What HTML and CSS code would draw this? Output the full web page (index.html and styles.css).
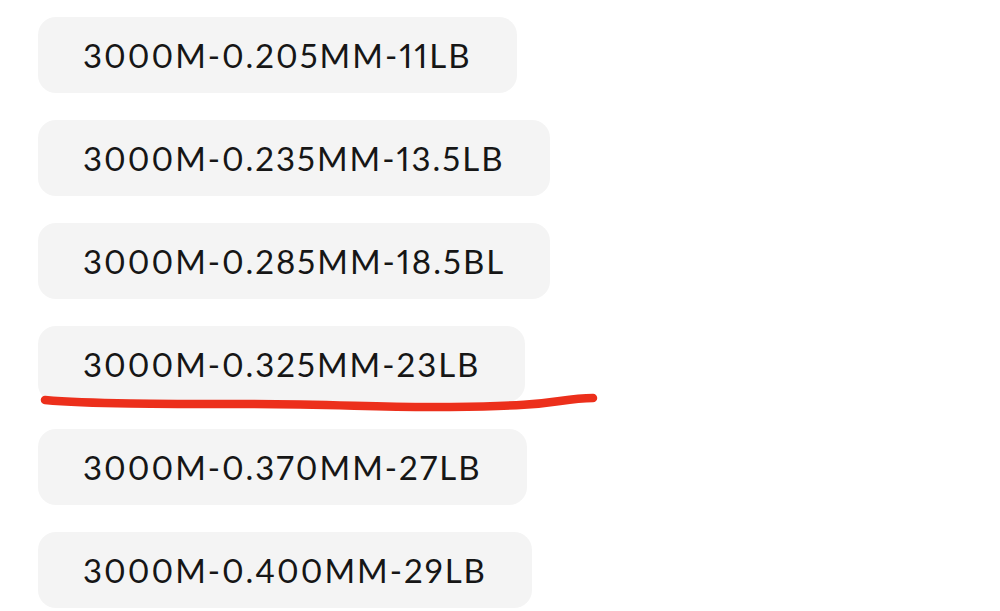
FILE: index.html
```html
<!DOCTYPE html>
<html lang="en">
<head>
  <meta charset="UTF-8">
  <title>Line spec</title>
  <link rel="stylesheet" href="styles.css">
</head>
<body>

  <div class="options">
    <div class="chip">3000M-0.205MM-11LB</div>
    <div class="chip">3000M-0.235MM-13.5LB</div>
    <div class="chip">3000M-0.285MM-18.5BL</div>
    <div class="chip">3000M-0.325MM-23LB</div>
    <div class="chip">3000M-0.370MM-27LB</div>
    <div class="chip">3000M-0.400MM-29LB</div>
  </div>

  <!-- hand drawn mark under the chosen one -->
  <svg class="mark" width="600" height="30" viewBox="0 0 600 30">
    <path d="M45 10 C 90 14, 160 14, 250 14 S 380 18, 450 17 S 540 14, 560 11 S 585 8, 593 8"
          fill="none" stroke="#ec2f1b" stroke-width="8.5" stroke-linecap="round"/>
  </svg>

</body>
</html>
```

FILE: styles.css
```css
body {
  margin: 0;
  background: #ffffff;
  font-family: 'Lato', 'Noto Sans', sans-serif;
  color: #161616;
  position: relative;
  height: 611px;
  overflow: hidden;
}

.options {
  display: flex;
  flex-direction: column;
  align-items: flex-start;
  gap: 27px;
  padding: 17px 0 0 38px;
}

.chip {
  display: flex;
  align-items: center;
  height: 76px;
  padding: 0 45px;
  background: #f4f4f4;
  border-radius: 18px;
  font-size: 33px;
  letter-spacing: 2px;
  font-variant-numeric: proportional-nums;
  box-sizing: border-box;
}

.mark {
  position: absolute;
  left: 0;
  top: 390px;
}
```
